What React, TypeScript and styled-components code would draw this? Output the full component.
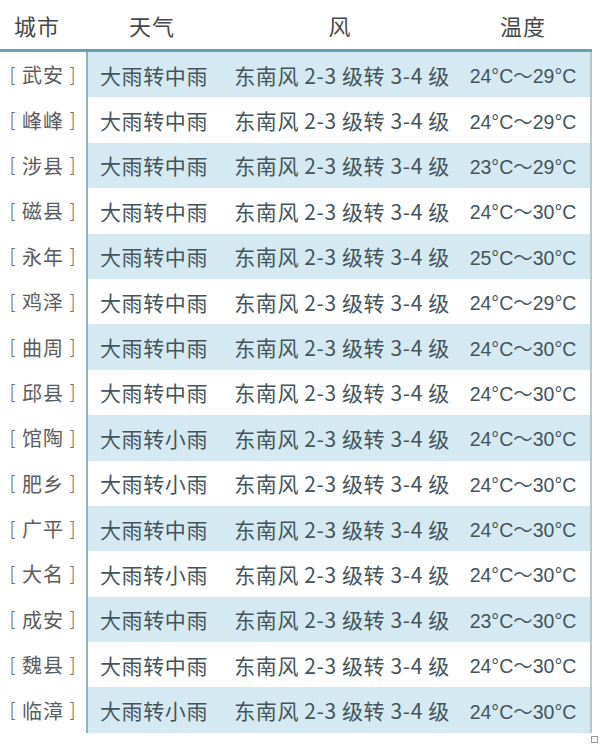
import React from "react";
import styled, { createGlobalStyle } from "styled-components";

interface CityWeather {
  city: string;
  weather: string;
  low: number;
  high: number;
}

const rows: CityWeather[] = [
  { city: "武安", weather: "大雨转中雨", low: 24, high: 29 },
  { city: "峰峰", weather: "大雨转中雨", low: 24, high: 29 },
  { city: "涉县", weather: "大雨转中雨", low: 23, high: 29 },
  { city: "磁县", weather: "大雨转中雨", low: 24, high: 30 },
  { city: "永年", weather: "大雨转中雨", low: 25, high: 30 },
  { city: "鸡泽", weather: "大雨转中雨", low: 24, high: 29 },
  { city: "曲周", weather: "大雨转中雨", low: 24, high: 30 },
  { city: "邱县", weather: "大雨转中雨", low: 24, high: 30 },
  { city: "馆陶", weather: "大雨转小雨", low: 24, high: 30 },
  { city: "肥乡", weather: "大雨转小雨", low: 24, high: 30 },
  { city: "广平", weather: "大雨转中雨", low: 24, high: 30 },
  { city: "大名", weather: "大雨转小雨", low: 24, high: 30 },
  { city: "成安", weather: "大雨转中雨", low: 23, high: 30 },
  { city: "魏县", weather: "大雨转中雨", low: 24, high: 30 },
  { city: "临漳", weather: "大雨转小雨", low: 24, high: 30 },
];

const WIND = "东南风 2-3 级转 3-4 级";

const GlobalStyle = createGlobalStyle`
  html, body {
    margin: 0;
    padding: 0;
    background: #ffffff;
  }
  body {
    font-family: "Noto Sans CJK SC", "Noto Sans", sans-serif;
  }
`;

const Page = styled.div`
  width: 600px;
  height: 748px;
  display: flex;
  flex-direction: column;
  overflow: hidden;
`;

const Table = styled.div`
  width: 592px;
  display: flex;
  flex-direction: column;
`;

const HeaderRow = styled.div`
  display: grid;
  grid-template-columns: 86px 132px 244px 130px;
  height: 49px;
  border-bottom: 3px solid #64a3b4;
  align-items: center;
`;

const HeaderCell = styled.div<{ $shift?: number }>`
  text-align: center;
  font-size: 22px;
  color: #474747;
  letter-spacing: 1px;
  padding-right: ${(p) => p.$shift ?? 0}px;
`;

const Body = styled.div`
  display: flex;
  flex-direction: column;
`;

const Row = styled.div`
  display: grid;
  grid-template-columns: 86px 1fr;
  height: 45.4px;
`;

const CityCell = styled.div`
  display: flex;
  align-items: center;
  justify-content: center;
  font-size: 20px;
  color: #5c5c5c;
  letter-spacing: 1px;
`;

const Bracket = styled.span`
  color: #6e6e6e;
  font-family: "DejaVu Sans", sans-serif;
  font-weight: 300;
  margin: 0 4px;
`;

const DataBlock = styled.div<{ $striped: boolean }>`
  display: grid;
  grid-template-columns: 132px 244px 1fr;
  align-items: center;
  background: ${(p) => (p.$striped ? "#d4e9f1" : "#ffffff")};
  border-left: 2px solid #8fb2be;
  border-right: 2px solid #b9c6cb;
`;

const DataCell = styled.div`
  text-align: center;
  font-size: 21px;
  color: #43545c;
  white-space: nowrap;
  letter-spacing: 0.6px;
`;

const TempCell = styled(DataCell)`
  font-family: "Liberation Sans", "Noto Sans CJK SC", sans-serif;
  font-size: 19.5px;
  letter-spacing: 0;
  padding-right: 8px;
`;

const Footer = styled.div`
  display: flex;
  justify-content: flex-end;
  width: 598px;
  padding-top: 3px;
`;

const Handle = styled.div`
  width: 5px;
  height: 5px;
  border: 1px solid #9a9a9a;
`;

export default function App() {
  return (
    <>
      <GlobalStyle />
      <Page>
        <Table>
          <HeaderRow>
            <HeaderCell $shift={12}>城市</HeaderCell>
            <HeaderCell>天气</HeaderCell>
            <HeaderCell>风</HeaderCell>
            <HeaderCell $shift={8}>温度</HeaderCell>
          </HeaderRow>
          <Body>
            {rows.map((r, i) => (
              <Row key={r.city}>
                <CityCell>
                  <Bracket>[</Bracket>
                  {r.city}
                  <Bracket>]</Bracket>
                </CityCell>
                <DataBlock $striped={i % 2 === 0}>
                  <DataCell>{r.weather}</DataCell>
                  <DataCell>{WIND}</DataCell>
                  <TempCell>
                    {r.low}°C～{r.high}°C
                  </TempCell>
                </DataBlock>
              </Row>
            ))}
          </Body>
        </Table>
        <Footer>
          <Handle />
        </Footer>
      </Page>
    </>
  );
}
